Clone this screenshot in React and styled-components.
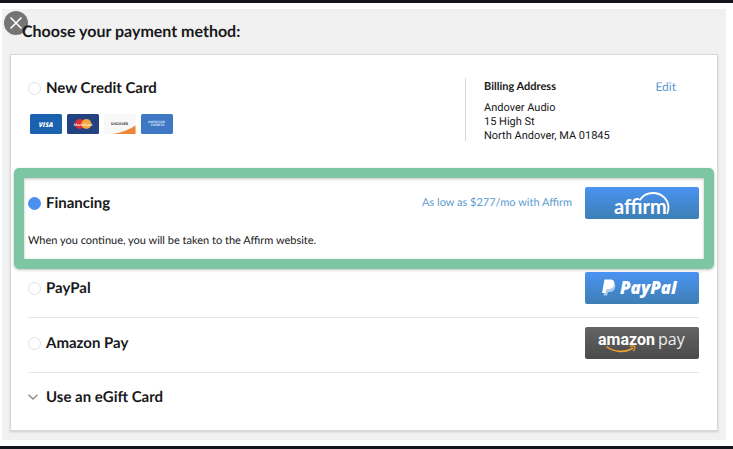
import React, { useState } from 'react';
import styled, { createGlobalStyle, css } from 'styled-components';

const GlobalStyle = createGlobalStyle`
  * {
    box-sizing: border-box;
  }

  body {
    margin: 0;
    background: #fff;
    color: #18181a;
    font-family: Lato, 'Liberation Sans', sans-serif;
    text-rendering: geometricPrecision;
  }
`;

const Page = styled.div`
  border-top: 3px solid #14151a;
  border-bottom: 3px solid #14151a;
  padding: 6px 7px 6px 2px;
`;

const Panel = styled.main`
  position: relative;
  background: #f1f1f1;
  padding: 13px 8px 9px;
`;

const CloseButton = styled.button`
  position: absolute;
  top: 2px;
  left: 2px;
  width: 24px;
  height: 24px;
  padding: 0;
  border: none;
  border-radius: 50%;
  background: #757575;
  cursor: pointer;

  svg {
    display: block;
  }
`;

const Title = styled.h1`
  position: relative;
  margin: 0 0 12px 12px;
  font-size: 16px;
  line-height: 20px;
  font-weight: 700;
`;

const Card = styled.form`
  background: #fff;
  border: 1px solid #d8d8d8;
  box-shadow: 0 1px 2px rgba(0, 0, 0, 0.15);
`;

const CreditCardSection = styled.section`
  display: flex;
  justify-content: space-between;
  padding: 23px 18px 27px 17px;
`;

const OptionLabel = styled.label`
  display: flex;
  align-items: center;
  gap: 5px;
  font-size: 15px;
  line-height: 20px;
  font-weight: 700;
  cursor: pointer;
`;

const Radio = styled.input`
  appearance: none;
  width: 13px;
  height: 13px;
  margin: 0;
  border: 1px solid #e0e0e0;
  border-radius: 50%;
  background: #fff;

  &:checked {
    border-color: #4a90ee;
    background: #4a90ee;
  }
`;

const CardBrands = styled.div`
  display: flex;
  gap: 5px;
  margin: 16px 0 0 2px;
`;

const Billing = styled.div`
  width: 234px;
  height: 63px;
  border-left: 1px solid #d6d6d6;
  padding: 0 23px 0 18px;
  font-size: 11px;
`;

const BillingHeader = styled.div`
  display: flex;
  justify-content: space-between;
  line-height: 18px;
`;

const BillingTitle = styled.h2`
  margin: 0;
  font-size: 11px;
  font-weight: 700;
`;

const textLink = css`
  color: #5b9bd0;
  text-decoration: none;
`;

const EditLink = styled.a`
  ${textLink}
  font-size: 12px;
`;

const Address = styled.address`
  margin-top: 5px;
  font-family: Roboto, 'Liberation Sans', sans-serif;
  font-style: normal;
  line-height: 14px;
  white-space: nowrap;
`;

const Highlight = styled.section`
  margin: 0 3px;
  border: 10px solid #7cc6a4;
  border-radius: 5px;
  padding: 9px 5px 10px 4px;
  box-shadow: 0 1px 3px rgba(0, 0, 0, 0.25), inset 0 1px 3px rgba(0, 0, 0, 0.25);
`;

const Row = styled.div`
  display: flex;
  align-items: center;
  justify-content: space-between;
`;

const Offer = styled.div`
  display: flex;
  align-items: center;
  gap: 13px;
`;

const OfferLink = styled.a`
  ${textLink}
  font-size: 11px;
  line-height: 16px;
`;

const Note = styled.p`
  margin: 14px 0 0;
  font-size: 11px;
  line-height: 16px;
`;

const OptionList = styled.div`
  margin: 0 18px 0 17px;
`;

const OptionRow = styled(Row)`
  height: 55px;
  padding-bottom: 4px;
  border-bottom: 1px solid #e6e6e6;

  &:first-child {
    height: 49px;
    padding-bottom: 10px;
  }
`;

const PayButton = styled.button`
  width: 114px;
  height: 32px;
  padding: 0;
  border: none;
  border-radius: 2px;
  cursor: pointer;
  background: ${props => props.$dark
    ? 'linear-gradient(#646464, #4a4a4a)'
    : 'linear-gradient(#4a93f2, #3d7fb4)'};

  svg {
    display: block;
  }
`;

const GiftCardToggle = styled.button`
  display: flex;
  align-items: center;
  gap: 8px;
  margin: 14px 0 23px 17px;
  padding: 0;
  border: none;
  background: none;
  color: inherit;
  font: 700 15px/20px Lato, 'Liberation Sans', sans-serif;
  text-rendering: inherit;
  cursor: pointer;
`;

const VisaIcon = () => (
  <svg width="32" height="20" viewBox="0 0 32 20" role="img" aria-label="Visa">
    <rect width="32" height="20" rx="1.5" fill="#1a62b0" />
    <text x="16" y="12.5" textAnchor="middle" fill="#fff" fontFamily="Open Sans, sans-serif" fontSize="6.5" fontWeight="800" fontStyle="italic">VISA</text>
  </svg>
);

const MastercardIcon = () => (
  <svg width="32" height="20" viewBox="0 0 32 20" role="img" aria-label="Mastercard">
    <rect width="32" height="20" rx="1.5" fill="#22437f" />
    <circle cx="12.8" cy="10" r="5" fill="#dc2f35" />
    <circle cx="19.4" cy="10" r="5" fill="#f3a83c" />
    <text x="16" y="11.5" textAnchor="middle" fill="#fff" fontFamily="Lato, sans-serif" fontSize="3.5" fontWeight="700">MasterCard</text>
  </svg>
);

const DiscoverIcon = () => (
  <svg width="32" height="20" viewBox="0 0 32 20" role="img" aria-label="Discover">
    <rect width="32" height="20" rx="1.5" fill="#f8f8f8" />
    <path d="M8.5 20 Q22 18 31.5 11.5 V20 Z" fill="#ee8637" />
    <text x="15.5" y="11" textAnchor="middle" fill="#333" fontFamily="Lato, sans-serif" fontSize="3.4" fontWeight="900">DISCOVER</text>
  </svg>
);

const AmexIcon = () => (
  <svg width="32" height="20" viewBox="0 0 32 20" role="img" aria-label="American Express">
    <rect width="32" height="20" rx="1.5" fill="#3f78c2" />
    <g fill="#d4e3f7" fontFamily="Lato, sans-serif" fontSize="3.2" fontWeight="900" textAnchor="middle">
      <text x="15.5" y="9">AMERICAN</text>
      <text x="16.5" y="12.2">EXPRESS</text>
    </g>
  </svg>
);

const AffirmLogo = () => (
  <svg width="114" height="32" viewBox="0 0 114 32" aria-hidden="true">
    <text x="29" y="27" fill="#fff" fontFamily="Lato, sans-serif" fontSize="20" fontWeight="700">affirm</text>
    <path d="M54.5 13.5 C57.5 8.5 62.5 6 68 6 C76.5 6 83.5 12.5 83.5 20.5 C83.5 23 82.9 25 82 26.8" fill="none" stroke="#fff" strokeWidth="1.8" />
  </svg>
);

const PaypalLogo = () => (
  <svg width="114" height="32" viewBox="0 0 114 32" aria-hidden="true">
    <path d="M21.5 10.5 H27 C30 10.5 31 13 30 16 C29 19 27 20 24.5 20 H23 L22.2 23.5 H18.5 Z" fill="#a9cbee" />
    <path d="M19.5 7.5 H25.5 C29 7.5 30 10 29 13 C28 16 26 17 23.5 17 H21.5 L20.5 21 H17 Z" fill="#fff" />
    <text x="35" y="22" fill="#fff" fontFamily="Open Sans, sans-serif" fontSize="17" fontWeight="800" fontStyle="italic">PayPal</text>
  </svg>
);

const AmazonLogo = () => (
  <svg width="114" height="32" viewBox="0 0 114 32" aria-hidden="true">
    <text x="13" y="18" fill="#fff" fontFamily="Roboto, sans-serif" fontSize="16" fontWeight="700">amazon</text>
    <text x="73" y="18" fill="#eee" fontFamily="Open Sans, sans-serif" fontSize="16" fontWeight="400">pay</text>
    <path d="M21.5 19.5 C29 25.5 40 26 48 21" fill="none" stroke="#f0a12c" strokeWidth="1.6" />
    <path d="M44.8 19.6 C47 18.8 49 18.8 50 19.4 C50.2 21 49.4 22.8 48.2 24" fill="none" stroke="#f0a12c" strokeWidth="1.2" />
  </svg>
);

function App() {
  const [method, setMethod] = useState('financing');

  const radioProps = value => ({
    type: 'radio',
    name: 'payment',
    value,
    checked: method === value,
    onChange: () => setMethod(value),
  });

  return (
    <>
      <GlobalStyle />
      <Page>
        <Panel>
          <CloseButton type="button" aria-label="Close">
            <svg width="24" height="24" viewBox="0 0 24 24" stroke="#fff" strokeWidth="1.6">
              <path d="M6.5 6.5 L17.5 17.5 M17.5 6.5 L6.5 17.5" />
            </svg>
          </CloseButton>
          <Title>Choose your payment method:</Title>

          <Card onSubmit={e => e.preventDefault()}>
            <CreditCardSection>
              <div>
                <OptionLabel>
                  <Radio {...radioProps('card')} />
                  New Credit Card
                </OptionLabel>
                <CardBrands>
                  <VisaIcon />
                  <MastercardIcon />
                  <DiscoverIcon />
                  <AmexIcon />
                </CardBrands>
              </div>
              <Billing>
                <BillingHeader>
                  <BillingTitle>Billing Address</BillingTitle>
                  <EditLink href="#edit">Edit</EditLink>
                </BillingHeader>
                <Address>
                  Andover Audio<br />
                  15 High St<br />
                  North Andover, MA 01845
                </Address>
              </Billing>
            </CreditCardSection>

            <Highlight>
              <Row>
                <OptionLabel>
                  <Radio {...radioProps('financing')} />
                  Financing
                </OptionLabel>
                <Offer>
                  <OfferLink href="#affirm">As low as $277/mo with Affirm</OfferLink>
                  <PayButton type="button" aria-label="Pay with Affirm"><AffirmLogo /></PayButton>
                </Offer>
              </Row>
              <Note>When you continue, you will be taken to the Affirm website.</Note>
            </Highlight>

            <OptionList>
              <OptionRow>
                <OptionLabel>
                  <Radio {...radioProps('paypal')} />
                  PayPal
                </OptionLabel>
                <PayButton type="button" aria-label="Pay with PayPal"><PaypalLogo /></PayButton>
              </OptionRow>
              <OptionRow>
                <OptionLabel>
                  <Radio {...radioProps('amazon')} />
                  Amazon Pay
                </OptionLabel>
                <PayButton type="button" $dark aria-label="Pay with Amazon"><AmazonLogo /></PayButton>
              </OptionRow>
            </OptionList>

            <GiftCardToggle type="button">
              <svg width="10" height="6" viewBox="0 0 10 6" fill="none" stroke="#8a8a8a" strokeWidth="1.3">
                <path d="M0.5 0.7 L5 5 L9.5 0.7" />
              </svg>
              Use an eGift Card
            </GiftCardToggle>
          </Card>
        </Panel>
      </Page>
    </>
  );
}

export default App;
